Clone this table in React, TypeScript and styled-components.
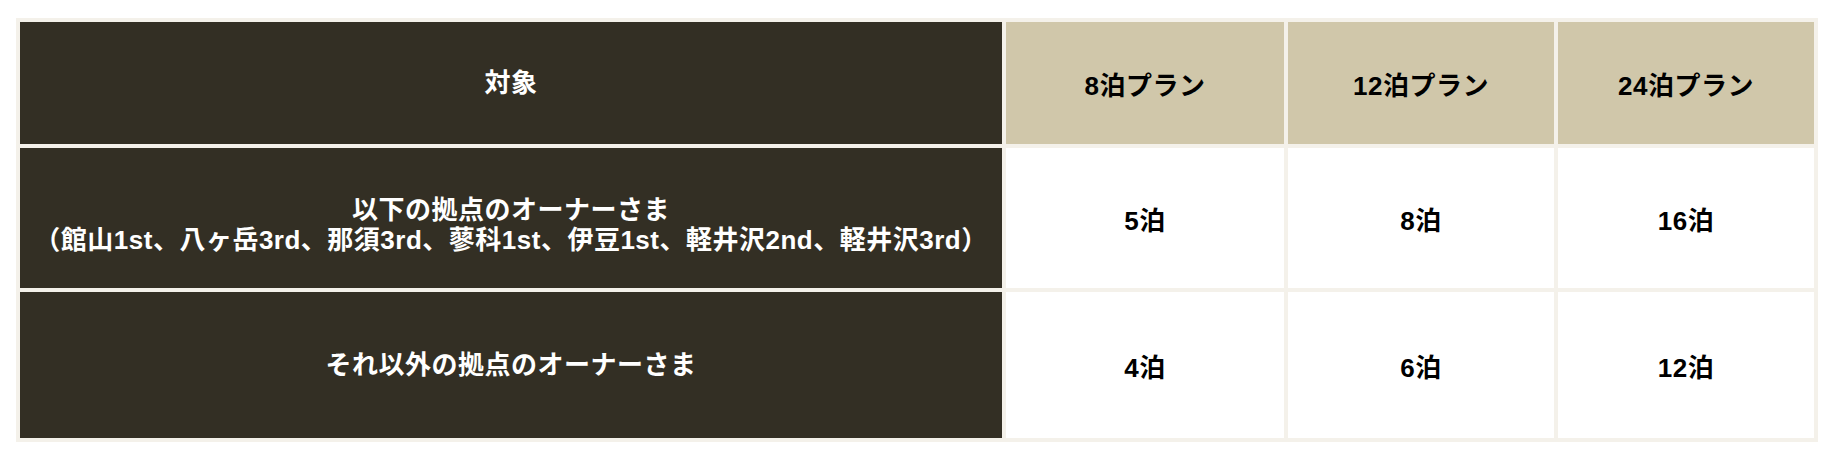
import React from 'react'
import styled, { createGlobalStyle } from 'styled-components'

const GlobalStyle = createGlobalStyle`
  body {
    margin: 0;
    background: #fff;
    font-family: "Liberation Sans", "Noto Sans CJK JP", sans-serif;
  }
`

const Wrapper = styled.div`
  padding: 18px 20px 18px 16px;
`

const Table = styled.table`
  width: 1802px;
  table-layout: fixed;
  border-collapse: separate;
  border-spacing: 4px;
  background: #f4f1ea;
  text-spacing-trim: space-all;
  letter-spacing: 0.5px;
`

const Row = styled.tr<{ h: number }>`
  height: ${({ h }) => h}px;
`

const LabelCell = styled.th<{ pt?: number }>`
  background: #332f24;
  color: #fff;
  font-size: 26px;
  font-weight: 700;
  line-height: 30px;
  text-align: center;
  vertical-align: middle;
  padding: ${({ pt }) => pt ?? 0}px 0 0;
`

const PlanCell = styled.th`
  background: #d0c7aa;
  color: #000;
  font-size: 26px;
  font-weight: 700;
  text-align: center;
  vertical-align: middle;
  padding: 0;
`

const ValueCell = styled.td`
  background: #fff;
  color: #000;
  font-size: 26px;
  font-weight: 700;
  text-align: center;
  vertical-align: middle;
  padding: 0;
`

const plans = ['8泊プラン', '12泊プラン', '24泊プラン']

const rows = [
  {
    label: (
      <>
        以下の拠点のオーナーさま
        <br />
        （館山1st、八ヶ岳3rd、那須3rd、蓼科1st、伊豆1st、軽井沢2nd、軽井沢3rd）
      </>
    ),
    values: ['5泊', '8泊', '16泊'],
    height: 140,
    pt: 14
  },
  {
    label: 'それ以外の拠点のオーナーさま',
    values: ['4泊', '6泊', '12泊'],
    height: 146,
    pt: 0
  }
]

const App: React.FC = () => {
  return (
    <Wrapper>
      <GlobalStyle />
      <Table>
        <colgroup>
          <col style={{ width: 982 }} />
          <col style={{ width: 278 }} />
          <col style={{ width: 266 }} />
          <col style={{ width: 256 }} />
        </colgroup>
        <thead>
          <Row h={122}>
            <LabelCell>対象</LabelCell>
            {plans.map(p => (
              <PlanCell key={p}>{p}</PlanCell>
            ))}
          </Row>
        </thead>
        <tbody>
          {rows.map((r, i) => (
            <Row h={r.height} key={i}>
              <LabelCell pt={r.pt}>{r.label}</LabelCell>
              {r.values.map(v => (
                <ValueCell key={v}>{v}</ValueCell>
              ))}
            </Row>
          ))}
        </tbody>
      </Table>
    </Wrapper>
  )
}

export default App
